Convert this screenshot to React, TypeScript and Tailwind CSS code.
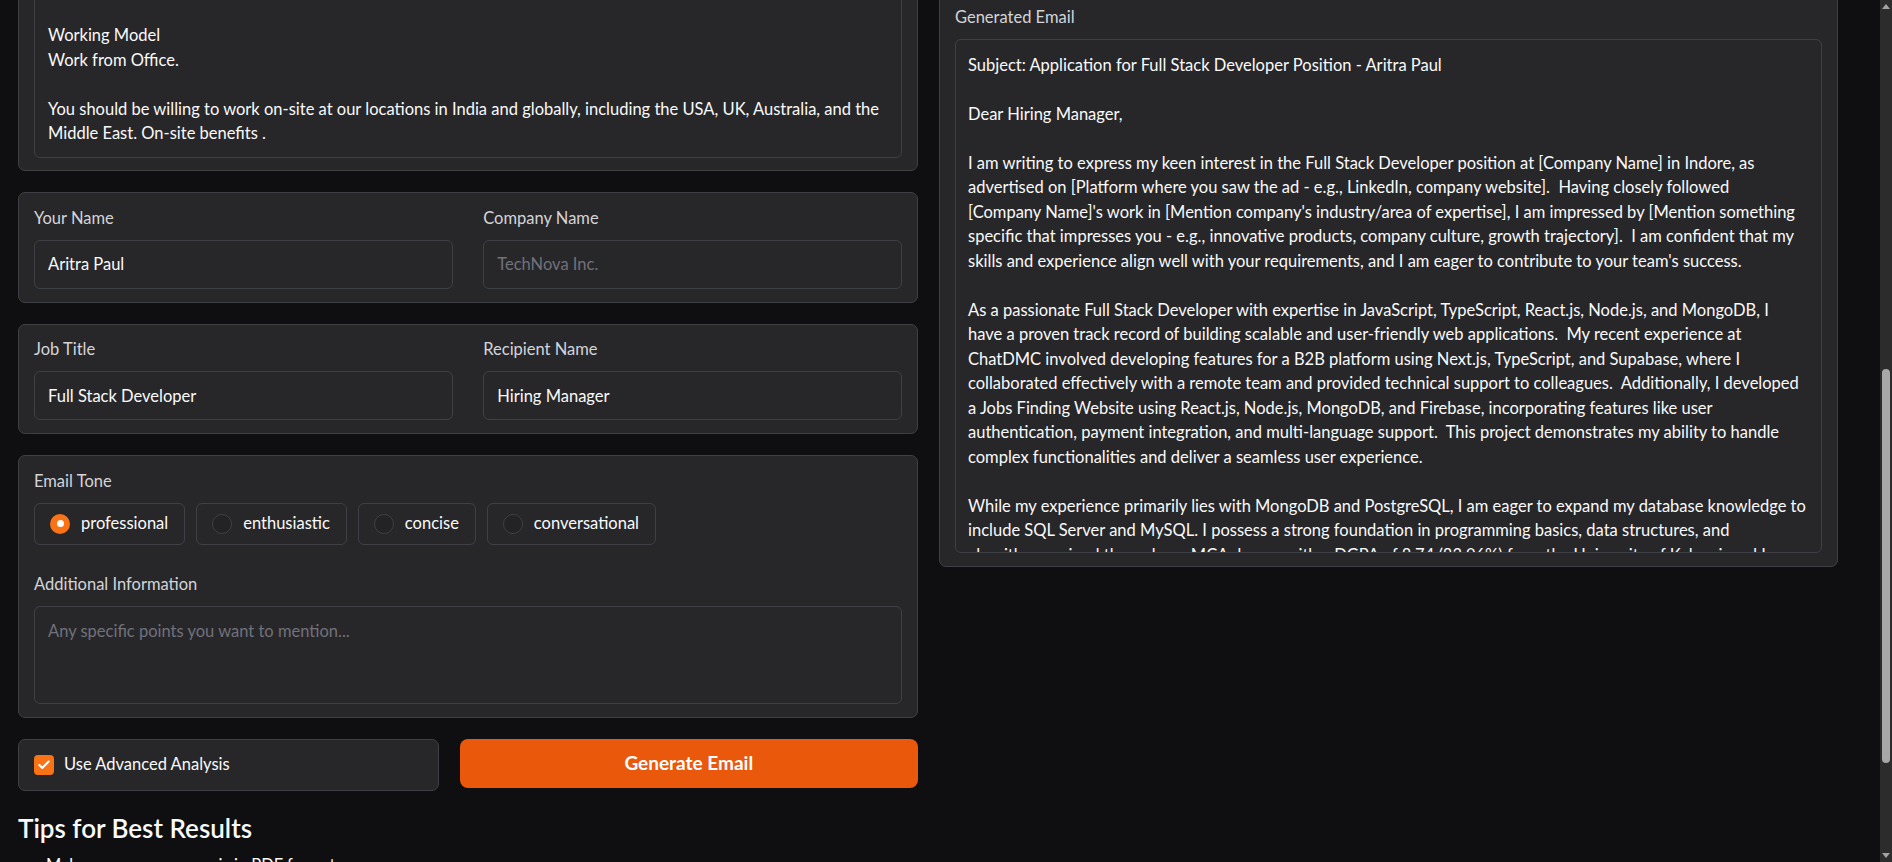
import { useLayoutEffect, useRef } from "react";
import { Check } from "lucide-react";

const jdLines = [
  "We are looking for a passionate Full Stack Developer to join our growing engineering team in Indore.",
  "",
  "Responsibilities",
  "Develop and maintain web applications using React.js, Node.js and modern JavaScript frameworks.",
  "Design and manage databases including MongoDB, PostgreSQL, SQL Server and MySQL.",
  "Collaborate with cross-functional teams to define, design and ship new features.",
  "",
  "Requirements",
  "Strong knowledge of JavaScript, TypeScript and REST APIs.",
  "Good understanding of data structures, algorithms and programming basics.",
  "",
  "Working Model",
  "Work from Office.",
  "",
  "You should be willing to work on-site at our locations in India and globally, including the USA, UK, Australia, and the",
  "Middle East. On-site benefits .",
];

const emailLines = [
  "Subject: Application for Full Stack Developer Position - Aritra Paul",
  "",
  "Dear Hiring Manager,",
  "",
  "I am writing to express my keen interest in the Full Stack Developer position at [Company Name] in Indore, as",
  "advertised on [Platform where you saw the ad - e.g., LinkedIn, company website].  Having closely followed",
  "[Company Name]'s work in [Mention company's industry/area of expertise], I am impressed by [Mention something",
  "specific that impresses you - e.g., innovative products, company culture, growth trajectory].  I am confident that my",
  "skills and experience align well with your requirements, and I am eager to contribute to your team's success.",
  "",
  "As a passionate Full Stack Developer with expertise in JavaScript, TypeScript, React.js, Node.js, and MongoDB, I",
  "have a proven track record of building scalable and user-friendly web applications.  My recent experience at",
  "ChatDMC involved developing features for a B2B platform using Next.js, TypeScript, and Supabase, where I",
  "collaborated effectively with a remote team and provided technical support to colleagues.  Additionally, I developed",
  "a Jobs Finding Website using React.js, Node.js, MongoDB, and Firebase, incorporating features like user",
  "authentication, payment integration, and multi-language support.  This project demonstrates my ability to handle",
  "complex functionalities and deliver a seamless user experience.",
  "",
  "While my experience primarily lies with MongoDB and PostgreSQL, I am eager to expand my database knowledge to",
  "include SQL Server and MySQL. I possess a strong foundation in programming basics, data structures, and",
  "algorithms, gained through my MCA degree with a DGPA of 8.74 (83.06%) from the University of Kalyani, and I am",
  "confident in my ability to quickly learn and adapt to new technologies.",
  "",
  "Thank you for your time and consideration. I look forward to hearing from you.",
  "",
  "Sincerely,",
  "Aritra Paul",
];

const tones = ["professional", "enthusiastic", "concise", "conversational"];

const tips = [
  "Make sure your resume is in PDF format",
  "Include the complete job description for better matching",
  "Provide the company name and recipient name if you know them",
  "Choose a tone that matches the company culture",
  "Use Additional Information for achievements you want to highlight",
  "Enable Advanced Analysis for a more detailed skill match",
];

function Label({ children }: { children: React.ReactNode }) {
  return <div className="mb-[9.5px] leading-[24.5px] text-[#d4d4d8]">{children}</div>;
}

function Field({ label, value, placeholder }: { label: string; value?: string; placeholder?: string }) {
  return (
    <div className="flex flex-col">
      <Label>{label}</Label>
      <input
        defaultValue={value}
        placeholder={placeholder}
        className="h-[49px] w-full rounded-[6px] border border-[#3f3f46] bg-[#27272a] px-[13px] leading-[24.5px] text-[#fafafa] outline-none placeholder:text-[#71717a]"
      />
    </div>
  );
}

export default function App() {
  const scrollRef = useRef<HTMLDivElement>(null);
  const anchorRef = useRef<HTMLDivElement>(null);

  useLayoutEffect(() => {
    const s = scrollRef.current;
    const a = anchorRef.current;
    if (s && a) {
      s.scrollTop = a.getBoundingClientRect().top - s.getBoundingClientRect().top + s.scrollTop - 192;
    }
  }, []);

  const card = "rounded-[7px] border border-[#3f3f46] bg-[#27272a] px-[15px] pt-[12.5px] pb-[13px]";

  return (
    <div className="flex h-screen w-full overflow-hidden bg-[#0f0f11] font-['Lato','Noto_Sans',sans-serif] text-[16.5px] text-[#fafafa]">
      <div ref={scrollRef} className="min-w-0 flex-1 overflow-y-scroll [scrollbar-width:none]">
        <div className="pl-[18px] pb-[48px]">
          <header className="pt-[28px] pb-[20px]">
            <h1 className="text-[32px] font-bold leading-[40px]">AI Cold Email Generator</h1>
            <p className="mt-[6px] leading-[24.5px] text-[#a1a1aa]">
              Upload your resume and paste a job description to generate a personalized cold email.
            </p>
          </header>

          <div className="flex items-start gap-[21px]">
            {/* Left column */}
            <div className="flex w-[900px] shrink-0 flex-col gap-[21px]">
              <div className={card}>
                <Label>Upload Resume (PDF)</Label>
                <div className="flex h-[140px] flex-col items-center justify-center rounded-[6px] border border-dashed border-[#3f3f46] text-[#a1a1aa]">
                  <span>Drop File Here</span>
                  <span>- or -</span>
                  <span>Click to Upload</span>
                </div>
              </div>

              <div className="rounded-[7px] border border-[#3f3f46] bg-[#27272a] px-[15px] pt-[12.5px] pb-[12.5px]">
                <Label>Job Description</Label>
                <textarea
                  wrap="off"
                  defaultValue={jdLines.join("\n")}
                  className="block h-[417px] w-full resize-none overflow-hidden whitespace-pre rounded-[6px] border border-[#3f3f46] bg-[#27272a] px-[13px] pt-[12px] pb-[12px] leading-[24.5px] text-[#fafafa] outline-none"
                />
              </div>

              <div ref={anchorRef} className={card}>
                <div className="grid grid-cols-2 gap-x-[30.5px]">
                  <Field label="Your Name" value="Aritra Paul" />
                  <Field label="Company Name" placeholder="TechNova Inc." />
                </div>
              </div>

              <div className={card}>
                <div className="grid grid-cols-2 gap-x-[30.5px]">
                  <Field label="Job Title" value="Full Stack Developer" />
                  <Field label="Recipient Name" value="Hiring Manager" />
                </div>
              </div>

              <div className={card}>
                <Label>Email Tone</Label>
                <div className="flex flex-wrap gap-[11px]">
                  {tones.map((t, i) => (
                    <label
                      key={t}
                      className="flex items-center gap-[11px] rounded-[6px] border border-[#3f3f46] bg-[#27272a] py-[7.75px] pl-[15px] pr-[16px] leading-[24.5px]"
                    >
                      {i === 0 ? (
                        <span className="flex h-5 w-5 items-center justify-center rounded-full bg-[#f97316]">
                          <span className="h-[7px] w-[7px] rounded-full bg-white" />
                        </span>
                      ) : (
                        <span className="h-5 w-5 rounded-full border border-[#3f3f46] bg-[#232326]" />
                      )}
                      <span>{t}</span>
                    </label>
                  ))}
                </div>
                <div className="mt-[27px]">
                  <Label>Additional Information</Label>
                  <textarea
                    placeholder="Any specific points you want to mention..."
                    className="block h-[98px] w-full resize-none overflow-hidden rounded-[6px] border border-[#3f3f46] bg-[#27272a] px-[13px] pt-[12px] leading-[24.5px] text-[#fafafa] outline-none placeholder:text-[#71717a]"
                  />
                </div>
              </div>

              <div className="flex items-start gap-[20.5px]">
                <div className="flex h-[52px] w-[421px] shrink-0 items-center gap-[10px] rounded-[7px] border border-[#3f3f46] bg-[#27272a] px-[15px]">
                  <span className="flex h-5 w-5 items-center justify-center rounded-[4px] bg-[#f97316]">
                    <Check size={14} strokeWidth={3.5} color="#ffffff" />
                  </span>
                  <span className="leading-[24.5px]">Use Advanced Analysis</span>
                </div>
                <button className="h-[49.5px] flex-1 rounded-[8px] bg-[#ea580c] text-[19px] font-bold text-white">
                  Generate Email
                </button>
              </div>
            </div>

            {/* Right column */}
            <div className="flex w-[899px] shrink-0 flex-col gap-[21px]">
              <div className={card + " h-[499.5px]"}>
                <Label>Resume Analysis</Label>
                <div className="h-[400px] rounded-[6px] border border-[#3f3f46] bg-[#27272a]" />
              </div>
              <div className={card}>
                <Label>Generated Email</Label>
                <textarea
                  wrap="off"
                  readOnly
                  value={emailLines.join("\n")}
                  className="block h-[514px] w-full resize-none overflow-hidden whitespace-pre rounded-[6px] border border-[#3f3f46] bg-[#27272a] px-[12px] pt-[13px] leading-[24.5px] text-[#fafafa] outline-none"
                />
              </div>
            </div>
          </div>

          <section className="mt-[21px]">
            <h2 className="text-[26px] font-semibold leading-[33px] text-[#fafafa]">Tips for Best Results</h2>
            <ul className="mt-[8px] list-disc pl-[28px] leading-[24.5px]">
              {tips.map((t) => (
                <li key={t}>{t}</li>
              ))}
            </ul>
          </section>
        </div>
      </div>

      {/* scrollbar */}
      <div className="flex h-full w-[12px] shrink-0 flex-col bg-[#2c2c2c]">
        <div className="flex h-[15px] justify-center pt-[4px]">
          <svg width="8" height="5" viewBox="0 0 8 5">
            <path d="M0 5 L4 0 L8 5 Z" fill="#a3a3a3" />
          </svg>
        </div>
        <div className="h-[354px]" />
        <div className="mx-auto h-[394px] w-[8px] rounded-full bg-[#a8a8a8]" />
        <div className="flex-1" />
        <div className="flex h-[15px] items-end justify-center pb-[4px]">
          <svg width="8" height="5" viewBox="0 0 8 5">
            <path d="M0 0 L8 0 L4 5 Z" fill="#a3a3a3" />
          </svg>
        </div>
      </div>
    </div>
  );
}
